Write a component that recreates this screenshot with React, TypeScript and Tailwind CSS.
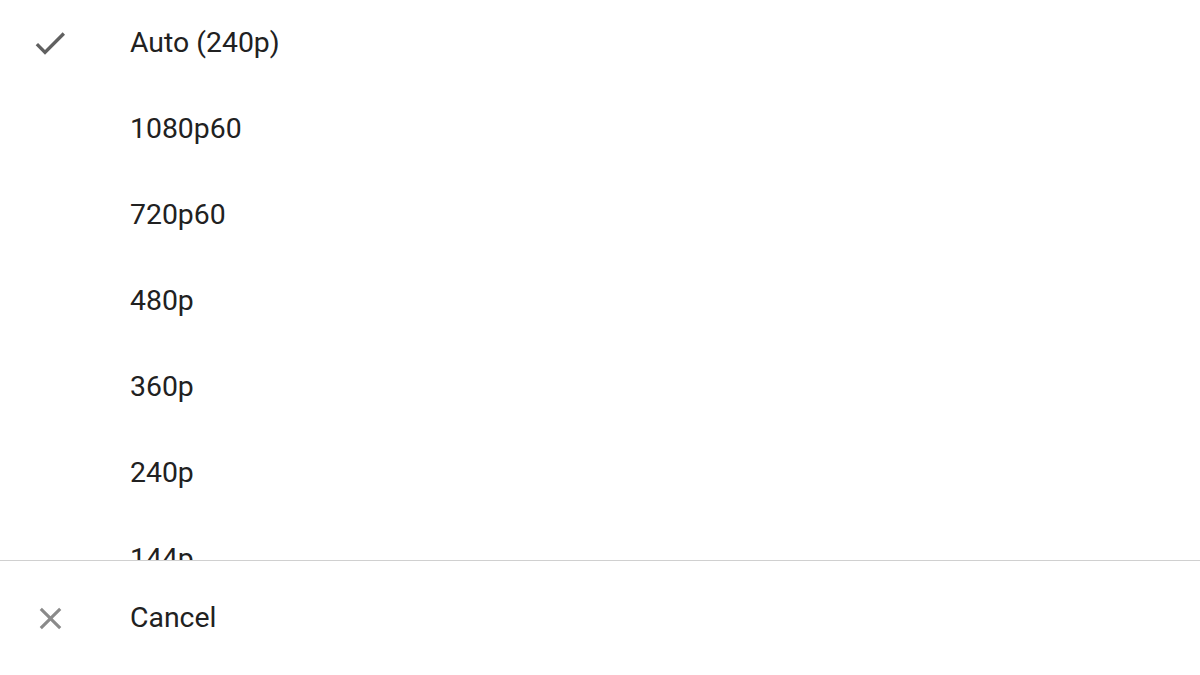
import React from "react";

const items = ["Auto (240p)", "1080p60", "720p60", "480p", "360p", "240p", "144p"];

export default function App() {
  return (
    <div
      className="w-[1200px] h-[675px] bg-white flex flex-col text-[#212121]"
      style={{ fontFamily: "Roboto, 'Noto Sans', sans-serif" }}
    >
      <div className="h-[560px] overflow-hidden flex flex-col">
        {items.map((it, i) => (
          <div key={it} className="h-[86px] shrink-0 flex items-center">
            <div className="w-[130px] flex justify-center pr-[30px]">
              {i === 0 && (
                <svg width="40" height="40" viewBox="0 0 24 24">
                  <path d="M9 16.17L4.83 12l-1.42 1.41L9 19 21 7l-1.41-1.41z" fill="#606060" />
                </svg>
              )}
            </div>
            <span className="text-[28.4px] leading-none">{it}</span>
          </div>
        ))}
      </div>
      <div className="border-t border-[#d0d0d0] flex-1 flex items-center">
        <div className="w-[130px] flex justify-center pr-[30px]">
          <svg width="37" height="37" viewBox="0 0 24 24">
            <path
              d="M19 6.41L17.59 5 12 10.59 6.41 5 5 6.41 10.59 12 5 17.59 6.41 19 12 13.41 17.59 19 19 17.59 13.41 12z"
              fill="#8a8a8a"
            />
          </svg>
        </div>
        <span className="text-[28.4px] leading-none">Cancel</span>
      </div>
    </div>
  );
}
